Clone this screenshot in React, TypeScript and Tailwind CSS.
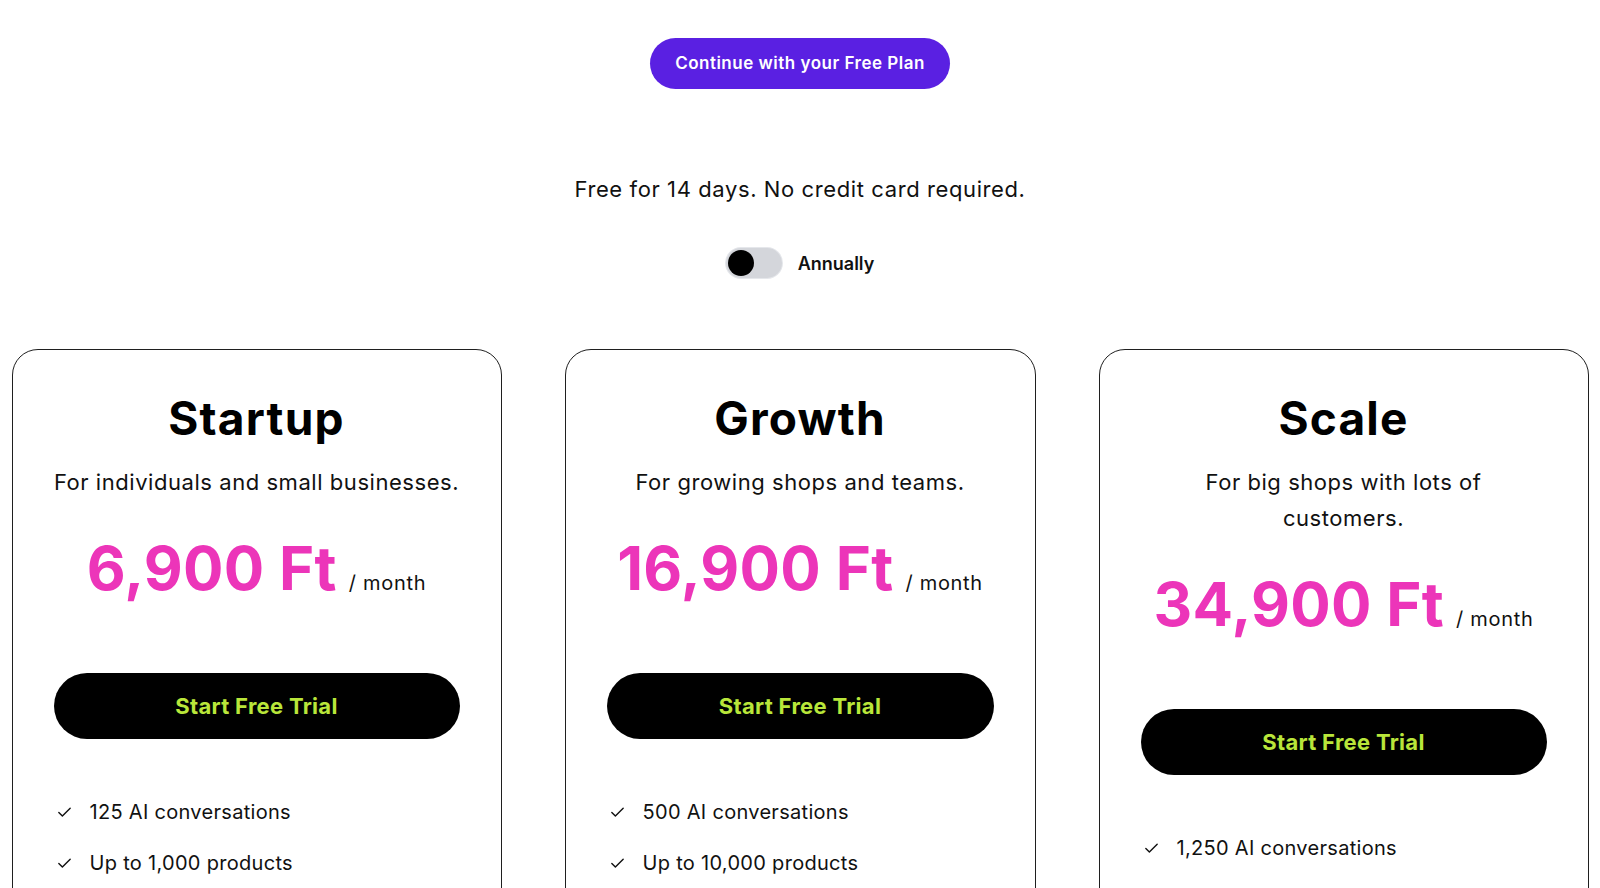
import React from "react";
import { Check } from "lucide-react";

type Plan = {
  name: string;
  desc: React.ReactNode;
  price: string;
  width: string;
  features: string[];
};

const plans: Plan[] = [
  {
    name: "Startup",
    desc: "For individuals and small businesses.",
    price: "6,900 Ft",
    width: "w-[490px]",
    features: ["125 AI conversations", "Up to 1,000 products"],
  },
  {
    name: "Growth",
    desc: "For growing shops and teams.",
    price: "16,900 Ft",
    width: "w-[471px]",
    features: ["500 AI conversations", "Up to 10,000 products"],
  },
  {
    name: "Scale",
    desc: (
      <>
        For big shops with lots of
        <br />
        customers.
      </>
    ),
    price: "34,900 Ft",
    width: "w-[490px]",
    features: ["1,250 AI conversations"],
  },
];

function Card({ plan }: { plan: Plan }) {
  return (
    <div
      className={`${plan.width} h-[640px] shrink-0 border border-[#1f1f1f] rounded-[26px] pt-[40px] px-[41px] flex flex-col items-center`}
    >
      <h2 className="shrink-0 text-[46px] leading-[56px] font-bold text-black tracking-[1.2px]">
        {plan.name}
      </h2>
      <p className="shrink-0 mt-[18px] text-[22px] leading-[36px] text-[#111] text-center tracking-[0.55px] whitespace-nowrap">
        {plan.desc}
      </p>
      <div className="shrink-0 mt-[38px] flex items-baseline">
        <span className="text-[60px] leading-[60px] font-bold text-[#ec35b9] tracking-[0.3px]">
          {plan.price}
        </span>
        <span className="ml-[12px] text-[20px] text-[#111] tracking-[0.7px]">/ month</span>
      </div>
      <button className="shrink-0 mt-[75px] w-full h-[66px] rounded-full bg-black text-[#b9e63a] text-[22px] font-bold tracking-[0.3px]">
        Start Free Trial
      </button>
      <ul className="shrink-0 mt-[58px] w-full flex flex-col gap-[21px]">
        {plan.features.map((f) => (
          <li key={f} className="flex items-center h-[30px] text-[20px] text-[#111] tracking-[0.3px]">
            <span className="w-[36px] pl-[2px] flex items-center">
              <Check size={17} strokeWidth={2} className="text-[#111]" />
            </span>
            <span>{f}</span>
          </li>
        ))}
      </ul>
    </div>
  );
}

export default function App() {
  return (
    <div
      className="w-full h-screen overflow-hidden bg-white flex flex-col items-center"
      style={{ fontFamily: "Inter, 'Noto Sans', sans-serif" }}
    >
      <button className="shrink-0 mt-[38px] w-[300px] h-[51px] rounded-full bg-[#5a20e2] text-white text-[17px] font-semibold tracking-[0.5px]">
        Continue with your Free Plan
      </button>
      <p className="shrink-0 mt-[84px] text-[22px] leading-[32px] text-[#111] tracking-[0.6px]">
        Free for 14 days. No credit card required.
      </p>
      <div className="shrink-0 mt-[43px] flex items-center h-[30px]">
        <div className="w-[56px] h-[30px] rounded-full bg-[#d4d6db] flex items-center pl-[2px] shadow-[0_0_0_1px_#e5e7eb]">
          <div className="w-[26px] h-[26px] rounded-full bg-black" />
        </div>
        <span className="ml-[16px] text-[18px] font-semibold text-[#111]">Annually</span>
      </div>
      <div className="shrink-0 mt-[71px] w-full flex justify-center gap-[63px]">
        {plans.map((p) => (
          <Card key={p.name} plan={p} />
        ))}
      </div>
    </div>
  );
}
